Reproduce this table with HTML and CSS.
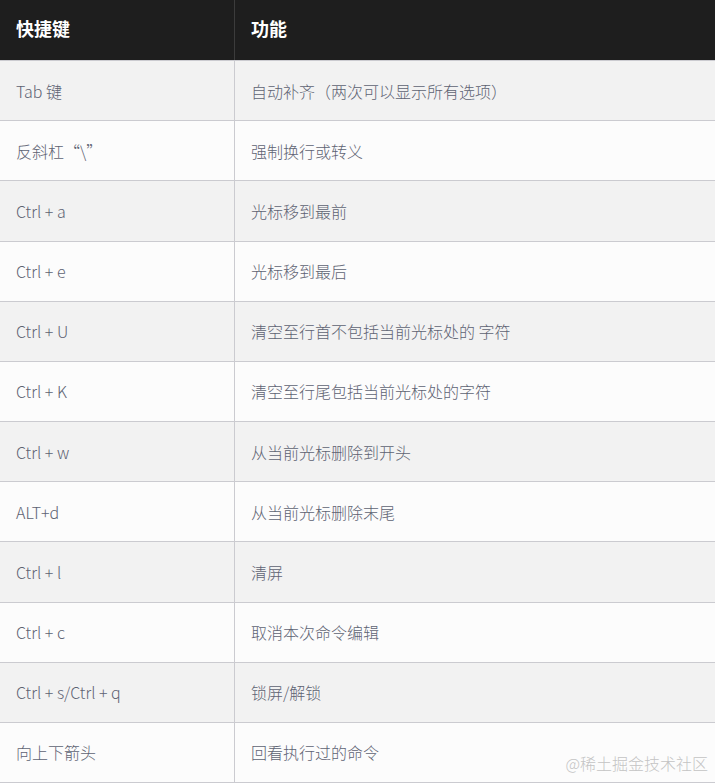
FILE: index.html
```html
<!DOCTYPE html>
<html lang="zh">
<head>
<meta charset="utf-8">
<link rel="stylesheet" href="styles.css">
</head>
<body>
<div class="table">
  <div class="row head"><div class="cell key">快捷键</div><div class="cell fn">功能</div></div>
  <div class="row odd"><div class="cell key">Tab 键</div><div class="cell fn">自动补齐（两次可以显示所有选项）</div></div>
  <div class="row even"><div class="cell key">反斜杠“\”</div><div class="cell fn">强制换行或转义</div></div>
  <div class="row odd"><div class="cell key">Ctrl + a</div><div class="cell fn">光标移到最前</div></div>
  <div class="row even"><div class="cell key">Ctrl + e</div><div class="cell fn">光标移到最后</div></div>
  <div class="row odd"><div class="cell key">Ctrl + U</div><div class="cell fn">清空至行首不包括当前光标处的 字符</div></div>
  <div class="row even"><div class="cell key">Ctrl + K</div><div class="cell fn">清空至行尾包括当前光标处的字符</div></div>
  <div class="row odd"><div class="cell key">Ctrl + w</div><div class="cell fn">从当前光标删除到开头</div></div>
  <div class="row even"><div class="cell key">ALT+d</div><div class="cell fn">从当前光标删除末尾</div></div>
  <div class="row odd"><div class="cell key">Ctrl + l</div><div class="cell fn">清屏</div></div>
  <div class="row even"><div class="cell key">Ctrl + c</div><div class="cell fn">取消本次命令编辑</div></div>
  <div class="row odd"><div class="cell key">Ctrl + s/Ctrl + q</div><div class="cell fn">锁屏/解锁</div></div>
  <div class="row even last"><div class="cell key">向上下箭头</div><div class="cell fn">回看执行过的命令</div></div>
</div>
<div class="watermark">@稀土掘金技术社区</div>
</body>
</html>
```

FILE: styles.css
```css
html, body {
  margin: 0;
  padding: 0;
  background: #fcfcfc;
}
body {
  font-family: "Noto Sans CJK SC", "Noto Sans", sans-serif;
  overflow: hidden;
  height: 783px;
  position: relative;
}
.table {
  display: flex;
  flex-direction: column;
  width: 715px;
}
.row {
  display: grid;
  grid-template-columns: 235px 1fr;
  height: 60.18px;
  box-sizing: border-box;
  border-bottom: 1px solid #cbcbd0;
  flex: none;
}
.row.head {
  height: 61px;
  background: #1e1e1e;
  border-bottom: 1px solid #cbcbd0;
}
.row.odd { background: #f2f2f2; }
.row.even { background: #fcfcfc; }
.cell {
  display: flex;
  align-items: center;
  padding: 0 16px;
  font-size: 16px;
  font-weight: 300;
  color: #5e6373;
}
.cell.key {
  border-right: 1px solid #cbcbd0;
}
.head .cell {
  color: #ffffff;
  font-size: 18px;
  font-weight: bold;
  padding-bottom: 4px;
}
.head .cell.key {
  border-right: 1px solid #3c3c3c;
}
.watermark {
  position: absolute;
  right: 7px;
  bottom: 8px;
  font-size: 16px;
  font-weight: 300;
  color: #c4c4c4;
  text-shadow: 0 0 2px #fff;
}
```
